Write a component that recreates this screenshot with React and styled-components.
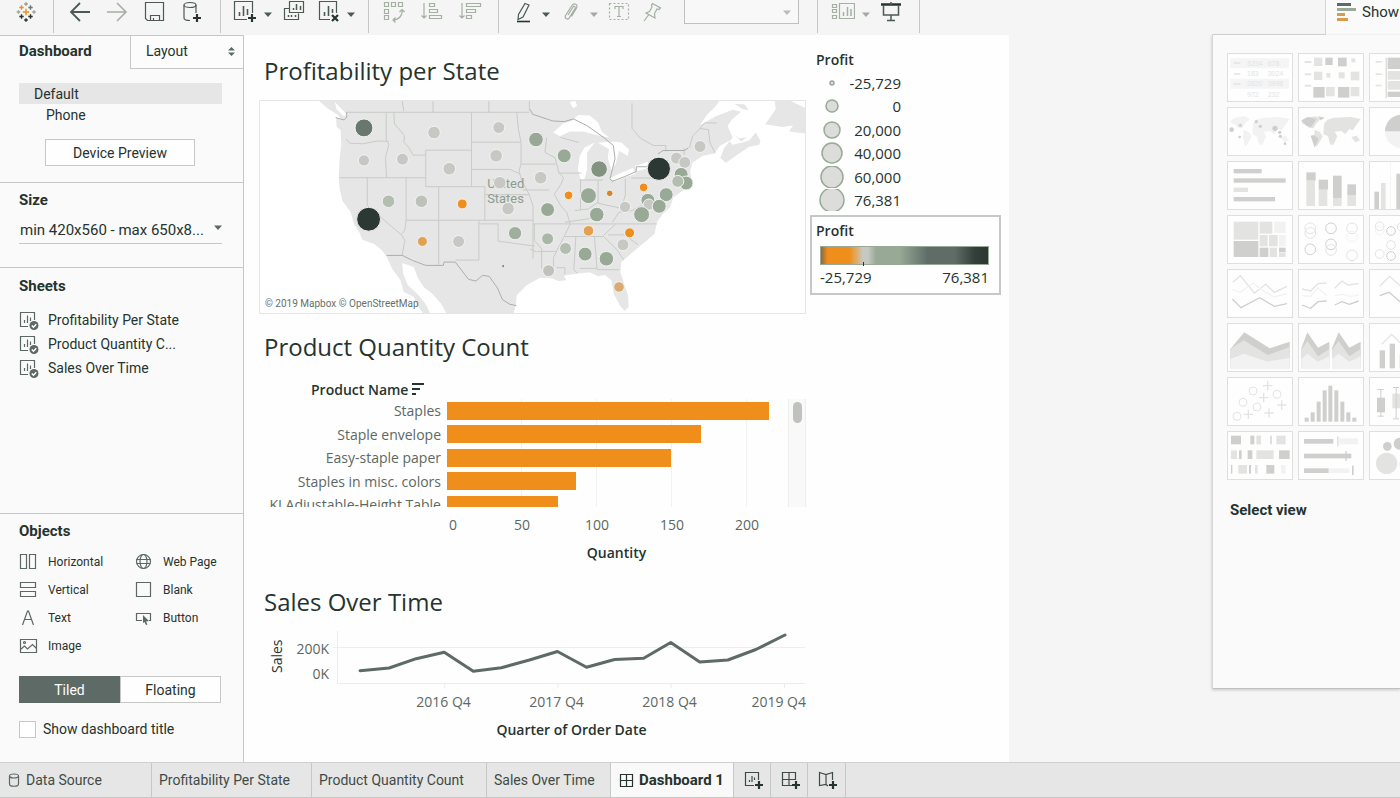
import React from "react";
import styled, { createGlobalStyle } from "styled-components";

const ink = "#26332e";
const soft = "#5c6863";
const line = "#c6c8c5";
const green = "#98a996";
const grey = "#c7c8c4";
const orange = "#f08e1c";
const uiFont = 'Roboto, "Liberation Sans", sans-serif';
const vizFont = '"Open Sans", "Noto Sans", sans-serif';

const GlobalStyle = createGlobalStyle`
  * { box-sizing: border-box; }
  body { margin: 0; background: #f4f5f4; color: ${ink}; font-family: ${uiFont}; font-size: 14px; }
  button, select, input { font: inherit; color: inherit; margin: 0; }
  button { cursor: pointer; background: none; border: 0; padding: 0; }
  h1, h2, h3, ul, p { margin: 0; padding: 0; }
`;

const Page = styled.div`
  min-height: 100vh;
  display: flex;
  flex-direction: column;
  overflow: hidden;
`;

/* ---------- toolbar ---------- */
const Toolbar = styled.header`
  display: flex;
  height: 35px;
  background: #f4f5f4;
`;
const ToolGroup = styled.div`
  flex: none;
  display: flex;
  gap: ${(p) => p.$gap}px;
  width: ${(p) => p.$width}px;
  height: 33px;
  padding: 0 0 9px ${(p) => p.$pad}px;
  border-right: 1px solid ${line};
`;
const ToolButton = styled.button`
  width: 24px;
  height: 24px;
  color: ${(p) => (p.$muted ? "#a3b0a2" : "#4c5a54")};
  svg { display: block; }
`;
const Split = styled.div`
  display: flex;
  align-items: center;
  gap: 7px;
`;
const CaretButton = styled.button`
  width: 8px;
  height: 24px;
  color: ${(p) => (p.$muted ? "#a3a9a3" : "#4c5a54")};
`;
const FitSelect = styled.select`
  appearance: none;
  width: 115px;
  height: 24px;
  margin-left: 11px;
  border: 1px solid #bfc1be;
  border-top: 0;
  background: #f8f8f8;
`;
const SelectWrap = styled.label`
  display: flex;
  align-items: center;
  position: relative;
  svg { position: absolute; right: ${(p) => p.$right}px; pointer-events: none; color: ${(p) => p.$color}; }
`;
const ShowMeHead = styled.div`
  display: flex;
  width: 188px;
  margin-left: auto;
`;
const ShowMeEdge = styled.div`
  flex: 1;
  border-bottom: 1px solid #d6d7d5;
`;
const ShowMeTab = styled.button`
  display: flex;
  align-items: center;
  gap: 6px;
  width: 75px;
  padding: 0 0 11px 11px;
  white-space: nowrap;
  font-size: 15px;
  background: #fafafa;
  border-left: 1px solid #d6d7d5;
  svg { flex: none; }
`;

/* ---------- workspace ---------- */
const Workspace = styled.div`
  flex: 1;
  display: flex;
  align-items: stretch;
`;
const Sidebar = styled.aside`
  flex: none;
  width: 244px;
  display: flex;
  flex-direction: column;
  background: #fafafa;
  border-right: 1px solid ${line};
`;
const Panes = styled.div`
  display: flex;
  height: 34px;
  border-top: 1px solid ${line};
`;
const PaneTab = styled.button`
  display: flex;
  align-items: center;
  justify-content: space-between;
  text-align: left;
  ${(p) =>
    p.$active
      ? "width: 130px; padding-left: 19px; padding-bottom: 3px; font-size: 15px; font-weight: 700;"
      : `flex: 1; padding: 0 7px 2px 15px; background: #fcfcfc; border-left: 1px solid ${line}; border-bottom: 1px solid ${line};`}
`;
const Section = styled.section`
  padding: ${(p) => p.$pad};
  border-bottom: ${(p) => (p.$last ? 0 : 1)}px solid ${line};
  flex: ${(p) => (p.$grow ? 1 : "none")};
`;
const SectionTitle = styled.h3`
  font-size: 15px;
  line-height: 20px;
  font-weight: 700;
`;
const Device = styled.button`
  display: block;
  width: 100%;
  height: 21px;
  text-align: left;
  padding-left: ${(p) => (p.$active ? 15 : 27)}px;
  background: ${(p) => (p.$active ? "#e5e6e5" : "none")};
`;
const PreviewButton = styled.button`
  display: block;
  width: 150px;
  height: 27px;
  margin: 14px 0 0 26px;
  background: #fefefe;
  border: 1px solid ${line};
`;
const SizeSelect = styled.select`
  appearance: none;
  width: 100%;
  height: 27px;
  margin-top: 7px;
  padding: 0 0 0 1px;
  font-size: 15px;
  background: none;
  border: 0;
  border-bottom: 1px solid ${line};
  border-radius: 0;
`;
const SheetList = styled.ul`
  list-style: none;
  margin-top: 12px;
`;
const Item = styled.button`
  display: flex;
  align-items: center;
  gap: 9px;
  height: ${(p) => (p.$small ? 28 : 24)}px;
  font-size: ${(p) => (p.$small ? 12 : 14)}px;
  white-space: nowrap;
  svg { color: #5c6863; }
`;
const ObjectGrid = styled.div`
  display: grid;
  grid-template-columns: 115px 1fr;
  margin-top: 7px;
`;
const Segmented = styled.div`
  display: flex;
  width: 202px;
  height: 27px;
  margin-top: 16px;
`;
const Segment = styled.button`
  flex: 1;
  color: ${(p) => (p.$active ? "#fff" : ink)};
  background: ${(p) => (p.$active ? "#5d6a65" : "#fefefe")};
  border: 1px solid ${(p) => (p.$active ? "#5d6a65" : line)};
`;
const CheckLabel = styled.label`
  display: flex;
  align-items: center;
  gap: 7px;
  margin-top: 16px;
  height: 20px;
`;
const Check = styled.input`
  appearance: none;
  width: 17px;
  height: 17px;
  background: #fff;
  border: 1px solid ${line};
`;

/* ---------- dashboard ---------- */
const Canvas = styled.main`
  flex: 0 1 765px;
  display: flex;
  gap: 4px;
  padding: 13px 8px 16px 15px;
  background: #fefefe;
  font-family: ${vizFont};
`;
const Charts = styled.div`
  flex: 1;
`;
const Title = styled.h2`
  padding: ${(p) => p.$top}px 0 0 5px;
  font-size: 24px;
  line-height: 40px;
  font-weight: 400;
  white-space: nowrap;
`;
const MapFrame = styled.div`
  margin-top: 9px;
  border: 1px solid #e4e5e4;
  background: #fff;
  display: grid;
  > * { grid-area: 1 / 1; }
  svg { display: block; width: 100%; height: auto; }
`;
const Attribution = styled.p`
  align-self: end;
  padding: 0 0 1px 5px;
  font: 10px/16px Roboto, sans-serif;
  color: #65706b;
`;
const BarHead = styled.div`
  display: flex;
  align-items: center;
  gap: 4px;
  height: 20px;
  margin: 12px 0 0 52px;
  font-size: 14px;
  font-weight: 600;
`;
const BarChart = styled.div`
  display: grid;
  grid-template-columns: 188px 1fr 17px;
  height: 108px;
  overflow: hidden;
`;
const Rows = styled.div`
  display: grid;
  grid-template-rows: repeat(5, 1fr);
  align-items: center;
  height: 117px;
`;
const BarNames = styled(Rows)`
  padding-right: 6px;
  text-align: right;
  font-size: 14px;
  color: ${soft};
  white-space: nowrap;
`;
const Bars = styled(Rows)`
  border-right: 1px solid #ededec;
  background: linear-gradient(to left, #f1f2f0 1px, transparent 1px) 0 0 / 22% 100%;
`;
const Bar = styled.div`
  height: 18px;
  background: ${orange};
`;
const Scroller = styled.div`
  background: #f9f9f9;
  border-right: 1px solid #ededec;
  padding: 3px 3px 0 4px;
`;
const Thumb = styled.div`
  width: 9px;
  height: 21px;
  border-radius: 5px;
  background: #bfc2bd;
`;
const Axis = styled.div`
  display: grid;
  grid-template-columns: ${(p) => p.$columns};
  margin: ${(p) => p.$margin};
  font-size: 14px;
  line-height: 20px;
  color: ${soft};
  text-align: center;
  white-space: nowrap;
`;
const LastTick = styled.span`
  text-align: right;
`;
const AxisTitle = styled.div`
  margin-top: 8px;
  padding-left: ${(p) => p.$left}px;
  text-align: center;
  font-size: 14px;
  line-height: 20px;
  font-weight: 600;
`;
const LineChart = styled.div`
  display: grid;
  grid-template-columns: 28px 42px 1fr;
  height: 60px;
  margin-top: 7px;
  padding-left: 4px;
  svg { display: block; width: 100%; height: 60px; }
`;
const SideTitle = styled.div`
  writing-mode: vertical-rl;
  transform: rotate(180deg);
  font-size: 14px;
  line-height: 20px;
  width: 20px;
  height: 54px;
  text-align: center;
  margin-left: 4px;
`;
const Ticks = styled.div`
  padding: 7px 4px 0 0;
  font-size: 14px;
  line-height: 25px;
  text-align: right;
  color: ${soft};
`;
const Legends = styled.aside`
  flex: none;
  width: 191px;
  padding-top: 1px;
`;
const LegendTitle = styled.h3`
  font-size: 14px;
  line-height: 20px;
  font-weight: 600;
`;
const SizeLegend = styled.div`
  padding: 1px 6px 0;
`;
const SizeRows = styled.div`
  display: grid;
  grid-template-rows: repeat(6, 1fr);
  height: 141px;
  margin-top: 1px;
`;
const SizeRow = styled.div`
  display: flex;
  align-items: center;
  justify-content: space-between;
  width: 85px;
  font-size: 15px;
  svg { margin-left: 2px; }
`;
const ColorLegend = styled.div`
  margin-top: 3px;
  height: 80px;
  padding: 4px 10px 0 4px;
  border: 2px solid #c6c8c5;
`;
const Ramp = styled.div`
  height: 19px;
  margin: 5px 0 0 4px;
  border: 1px solid ${green};
  background: linear-gradient(to right, #8b6a3a 0, ${orange} 4%, ${orange} 17%, #ddb077 22%, ${grey} 25%, ${grey} 28%, ${green} 33%, ${green} 47%, #5f6c67 64%, #5f6c67 80%, #343f3b 92%, #2c3733 100%);
`;
const RampTick = styled.div`
  width: 1px;
  height: 4px;
  margin: 15px 0 0 42px;
  background: ${ink};
`;
const RampLabels = styled.div`
  display: flex;
  justify-content: space-between;
  padding: 2px 0 0 4px;
  font-size: 15px;
  line-height: 20px;
`;

/* ---------- show me ---------- */
const ShowMe = styled.aside`
  align-self: flex-start;
  flex: none;
  width: 188px;
  height: 654px;
  margin-left: auto;
  padding: 18px 0 0 14px;
  overflow: hidden;
  background: #fafafa;
  border-left: 1px solid #d6d7d5;
  border-bottom: 1px solid #bfc1be;
  box-shadow: 0 1px 3px rgba(0, 0, 0, 0.2);
`;
const ThumbGrid = styled.div`
  display: grid;
  grid-template-columns: repeat(3, 66px);
  gap: 5px;
`;
const Thumbnail = styled.button`
  height: 49px;
  background: #fefefe;
  border: 1px solid #dedfde;
  overflow: hidden;
  svg { display: block; width: 66px; height: 49px; margin: -1px; }
`;
const SelectView = styled.h3`
  margin: 20px 0 0 3px;
  font-size: 15px;
  line-height: 20px;
`;

/* ---------- sheet tabs ---------- */
const TabBar = styled.nav`
  display: flex;
  height: 36px;
  background: #e5e6e5;
  border-top: 1px solid #cfd1ce;
  border-bottom: 1px solid ${line};
`;
const SheetTab = styled.button`
  display: flex;
  align-items: center;
  gap: ${(p) => (p.$active ? 1 : 6)}px;
  flex: none;
  width: ${(p) => p.$width}px;
  padding-left: ${(p) => p.$pad || 7}px;
  white-space: nowrap;
  color: ${(p) => (p.$active ? ink : "#3f4b46")};
  font-size: ${(p) => (p.$active ? 15 : 14)}px;
  font-weight: ${(p) => (p.$active ? 700 : 400)};
  background: ${(p) => (p.$active ? "#f9f9f9" : "none")};
  border-right: 1px solid ${line};
  svg { flex: none; }
`;

const Caret = () => (
  <svg width="8" height="5" viewBox="0 0 8 5" aria-hidden="true"><path d="M0 .5h8L4 5z" fill="currentColor" /></svg>
);

const Icon = ({ children, size = 24, w = 1.2 }) => (
  <svg width={size} height={size} viewBox={`0 0 ${size} ${size}`} fill="none" stroke="currentColor" strokeWidth={w} aria-hidden="true">
    {children}
  </svg>
);
const Plus = ({ x, y }) => <path d={`M${x - 4} ${y}h8M${x} ${y - 4}v8`} stroke={ink} strokeWidth="2.2" />;

function LogoIcon() {
  const crosses = [
    [12, 12, 3.2, orange], [12, 4, 1.8, "#8f9f90"], [12, 20, 1.8, ink], [4.5, 12, 1.8, green], [20, 12, 1.8, green],
    [7.5, 7.5, 2.2, orange], [16.5, 7.5, 2.2, "#6b7a72"], [7.5, 16.5, 2.2, ink], [16.5, 16.5, 2.2, ink],
  ];
  return (
    <Icon>
      {crosses.map(([x, y, r, c], i) => <path key={i} d={`M${x - r} ${y}h${r * 2}M${x} ${y - r}v${r * 2}`} stroke={c} strokeWidth="1.4" />)}
    </Icon>
  );
}

function TopBar() {
  return (
    <Toolbar>
      <ToolGroup $width={54} $pad={14} $gap={0}><ToolButton aria-label="Start page"><LogoIcon /></ToolButton></ToolGroup>
      <ToolGroup $width={167} $pad={14} $gap={13}>
        <ToolButton aria-label="Undo"><Icon w={1.8}><path d="M22 12H3M12 3l-9 9 9 9" /></Icon></ToolButton>
        <ToolButton aria-label="Redo" $muted><Icon w={1.6}><path d="M2 12h19M12 3l9 9-9 9" /></Icon></ToolButton>
        <ToolButton aria-label="Save"><Icon><path d="M3.5 2.5h18v18H5.500l-2-2zM8.500 20.500v-5h9v5M11.500 20.500v-2.500" /></Icon></ToolButton>
        <ToolButton aria-label="New data source">
          <Icon><ellipse cx="11" cy="5" rx="6" ry="2.5" /><path d="M5 5v13c0 2 3 2.5 6 2.5M17 5v8" /><Plus x={18} y={18} /></Icon>
        </ToolButton>
      </ToolGroup>
      <ToolGroup $width={148} $pad={12} $gap={10}>
        <Split>
          <ToolButton aria-label="New worksheet">
            <Icon><path d="M14 19.5H1.500v-18h18V13" /><path d="M6.500 16v-4M10.500 16V6M14.500 15V9" strokeWidth="1.6" /><Plus x={19} y={18} /></Icon>
          </ToolButton>
          <CaretButton aria-label="New worksheet options"><Caret /></CaretButton>
        </Split>
        <ToolButton aria-label="Duplicate">
          <Icon><path d="M7.500 1.500h14v11h-14zM7 8.500H2.500v11h14v-6" /><path d="M11.500 10V8M14.500 10V4M18.500 10V6M6.500 17v-2M9.500 17v-2M13.500 17v-2" strokeWidth="1.5" /></Icon>
        </ToolButton>
        <Split>
          <ToolButton aria-label="Clear sheet">
            <Icon><path d="M14 19.500H3.500v-18h17V13" /><path d="M8.500 16v-4M12.500 16V6M16.500 13V9" strokeWidth="1.6" /><path d="M16 15l6 6M22 15l-6 6" stroke={ink} strokeWidth="2.2" /></Icon>
          </ToolButton>
          <CaretButton aria-label="Clear sheet options"><Caret /></CaretButton>
        </Split>
      </ToolGroup>
      <ToolGroup $width={130} $pad={13} $gap={14}>
        <ToolButton aria-label="Swap rows and columns" $muted>
          <Icon><path d="M2.500 2.500h4v4h-4zM9.500 2.500h4v4h-4zM16.500 2.500h4v4h-4zM2.500 9.500h4v4h-4zM2.500 15.500h4v4h-4zM20 9c1 6-3 11-9 11M13.500 17.500L11 20l2.500 2.500M17.500 12L20 9.500l2.500 2.500" /></Icon>
        </ToolButton>
        <ToolButton aria-label="Sort ascending" $muted><Icon><path d="M4 3v15M1.500 15.500L4 18l2.500-2.500M9.500 3.500h5v3h-5zM9.500 9.500h8v3h-8zM9.500 15.500h12v3h-12z" /></Icon></ToolButton>
        <ToolButton aria-label="Sort descending" $muted><Icon><path d="M4 3v15M1.500 15.500L4 18l2.500-2.500M8.500 3.500h14v3h-14zM8.500 9.500h9v3h-9zM8.500 15.500h5v3h-5z" /></Icon></ToolButton>
      </ToolGroup>
      <ToolGroup $width={319} $pad={12} $gap={9}>
        <Split>
          <ToolButton aria-label="Highlight"><Icon><path d="M14 3.500l4 1.500-6 12-5 2.500.500-5z" /><path d="M6 21.500h13" stroke={ink} strokeWidth="1.6" /></Icon></ToolButton>
          <CaretButton aria-label="Highlight options"><Caret /></CaretButton>
        </Split>
        <Split>
          <ToolButton aria-label="Group members" $muted><Icon><path d="M9 15l5-8c1-1.500 3-.5 2 1.500l-5.500 9c-1.500 3-5.500 1-4-2l6.500-10c2-3 6.500-1 4.500 2.500l-5 8.500" /></Icon></ToolButton>
          <CaretButton aria-label="Group options" $muted><Caret /></CaretButton>
        </Split>
        <ToolButton aria-label="Show mark labels" $muted>
          <Icon><rect x="2.5" y="3.5" width="19" height="16" strokeDasharray="2 2" /><path d="M8 9V6.500h8V9M12 6.500v10M10 16.500h4" /></Icon>
        </ToolButton>
        <ToolButton aria-label="Fix axes" $muted><Icon><path d="M12.500 3.500l8 4.500-1.500 1.500-2-.5-2.500 4.500.5 4.500-9-5 3.500-1.500 2.500-4.500-.5-2zM8.500 15L4 21" /></Icon></ToolButton>
        <SelectWrap $right={8} $color="#b9bcb8"><FitSelect aria-label="Fit" defaultValue=""><option value="" /></FitSelect><Caret /></SelectWrap>
      </ToolGroup>
      <ToolGroup $width={102} $pad={13} $gap={9}>
        <Split>
          <ToolButton aria-label="Show cards" $muted>
            <Icon><path d="M8.500 3.500h15v15h-15zM1.500 4.500h4v3h-4zM1.500 9.500h4v3h-4zM1.500 15.500h4v3h-4z" /><path d="M12.500 16v-4M16.500 16V7M20 16V9" strokeWidth="1.5" /></Icon>
          </ToolButton>
          <CaretButton aria-label="Card options" $muted><Caret /></CaretButton>
        </Split>
        <ToolButton aria-label="Presentation mode"><Icon w={1.5}><path d="M2 4.500h20" stroke={ink} strokeWidth="2.5" /><path d="M4.500 5v10h15V5M12 15v5M8 20.500h8M12 2v3" /></Icon></ToolButton>
      </ToolGroup>
      <ShowMeHead>
        <ShowMeEdge />
        <ShowMeTab>
          <svg width="19" height="18" viewBox="0 0 19 18" aria-hidden="true">
            <path d="M0 0h14v3H0z" fill="#5d6a65" /><path d="M0 5h19v3H0z" fill={green} /><path d="M0 10h8v3H0zM0 15h11v3H0z" fill="#d99a4c" />
          </svg>
          Show
        </ShowMeTab>
      </ShowMeHead>
    </Toolbar>
  );
}

const SheetIcon = () => (
  <Icon size={20}>
    <path d="M9 16.500H1.500v-14h14V10" />
    <path d="M5.500 13v-3M8.500 13V5.500M11.500 11V7.500" />
    <circle cx="15" cy="15.5" r="4.5" fill="#5d6a65" stroke="none" />
    <path d="M12.800 15.500l1.700 1.700 2.800-3" stroke="#fff" strokeWidth="1.4" />
  </Icon>
);

const objects = [
  ["Horizontal", <path d="M1.500 2.500h6v14h-6zM10.500 2.500h6v14h-6z" />],
  ["Web Page", <><circle cx="9.5" cy="9.5" r="7" /><ellipse cx="9.5" cy="9.5" rx="3.5" ry="7" /><path d="M2.500 7.500h14M2.500 11.500h14" /></>],
  ["Vertical", <path d="M1.500 2.500h15v5h-15zM1.500 11.500h15v5h-15z" />],
  ["Blank", <path d="M2.500 2.500h14v14h-14z" />],
  ["Text", <path d="M3.500 17l5-14h1l5 14M5.500 11.500h7" />],
  ["Button", <><path d="M8 12.500H2.500v-7h14v7H15" /><path d="M9 7l6 6-3 .5 1.500 3-1.500.5-1.500-3L9 15z" fill="#5c6863" stroke="none" /></>],
  ["Image", <><path d="M1.500 3.500h16v13h-16zM1.500 13.500l4-3.500 3 3 5-4.500 4 4" /><circle cx="5.5" cy="6.5" r="1" /></>],
];

const sheets = ["Profitability Per State", "Product Quantity C...", "Sales Over Time"];

function LeftPane() {
  return (
    <Sidebar>
      <Panes>
        <PaneTab $active>Dashboard</PaneTab>
        <PaneTab>
          Layout
          <svg width="9" height="9" viewBox="0 0 9 9" aria-hidden="true"><path d="M1 3.500h7L4.500 0zM1 5.500h7L4.500 9z" fill="#5c6863" /></svg>
        </PaneTab>
      </Panes>
      <Section $pad="14px 21px 16px 19px">
        <Device $active>Default</Device>
        <Device>Phone</Device>
        <PreviewButton>Device Preview</PreviewButton>
      </Section>
      <Section $pad="7px 21px 23px 19px">
        <SectionTitle>Size</SectionTitle>
        <SelectWrap $right={0} $color="#5c6863">
          <SizeSelect aria-label="Dashboard size"><option>min 420x560 - max 650x8...</option></SizeSelect>
          <Caret />
        </SelectWrap>
      </Section>
      <Section $pad="8px 19px 0" $grow>
        <SectionTitle>Sheets</SectionTitle>
        <SheetList>
          {sheets.map((s) => <li key={s}><Item><SheetIcon />{s}</Item></li>)}
        </SheetList>
      </Section>
      <Section $pad="7px 19px 23px" $last>
        <SectionTitle>Objects</SectionTitle>
        <ObjectGrid>
          {objects.map(([name, shape]) => <Item key={name} $small><Icon size={20}>{shape}</Icon>{name}</Item>)}
        </ObjectGrid>
        <Segmented><Segment $active>Tiled</Segment><Segment>Floating</Segment></Segmented>
        <CheckLabel><Check type="checkbox" />Show dashboard title</CheckLabel>
      </Section>
    </Sidebar>
  );
}

/* x, y, radius, colour of every state mark */
const pale = "#b3bdb0";
const mixed = "#e2a051";
const marks = [
  [340, 261, 26, "#69786f"], [340, 359, 16], [456, 355, 17], [551, 275, 18], [746, 260, 17], [738, 345, 18], [597, 384, 18],
  [749, 426, 18], [774, 504, 18], [513, 482, 18, "#bcc2b9"], [414, 482, 18, pale], [636, 490, 14, orange], [516, 603, 14, mixed],
  [625, 603, 17], [795, 578, 19, "#a0ae9d"], [759, 677, 3, ink], [354, 536, 35, "#2b3833"], [858, 296, 21, green],
  [943, 345, 20, green], [872, 411, 18], [1048, 385, 24, "#82937f"], [956, 464, 12, orange], [1016, 465, 23, green],
  [1080, 458, 9, "#d8842a"], [1182, 440, 12, orange], [1228, 384, 34, "#2b3833"], [1281, 352, 17], [1306, 365, 17], [1352, 317, 17],
  [1295, 401, 20, green], [1310, 427, 20, green], [1285, 422, 17, pale], [1250, 462, 20, green], [1195, 479, 20, green],
  [1198, 492, 16], [1229, 497, 20, green], [1176, 522, 23, green], [1126, 499, 16], [1041, 522, 21, green], [1016, 571, 15, mixed],
  [1140, 577, 14, orange], [1120, 613, 17], [1070, 655, 21, green], [1006, 641, 20, green], [947, 624, 17, pale],
  [893, 595, 17, "#aab6a7"], [893, 507, 20, green], [896, 691, 17, "#bfc2bb"], [1108, 740, 15, "#d8ab72"],
];

function StateMap() {
  return (
    <svg viewBox="27 180 1641 639" role="img" aria-label="Profit by state">
      <g fill="#e5e6e5">
        <path d="M205 180L232 203 262 222 272 236 256 232 258 258 270 268 272 310 267 350 264 410 266 440 275 480 300 515 310 550 326 575 335 598 370 610 395 630 408 648 425 685 450 720 460 755 490 770 500 795 520 822H790L797 795 800 765 830 735 870 712 905 714 925 722 950 720 942 706 980 700 1020 696 1045 708 1065 704 1085 720 1092 760 1110 795 1125 812 1137 800 1135 765 1125 735 1112 695 1115 665 1150 635 1185 605 1215 580 1222 545 1240 520 1262 500 1272 470 1300 450 1328 430 1322 390 1330 365 1360 345 1396 338 1412 315 1440 300 1450 312 1480 305 1500 298 1520 275 1534 300 1530 312 1500 318 1460 345 1430 366 1413 352 1424 322 1450 290 1435 255 1446 238 1475 212 1450 206 1400 226 1352 252 1372 222 1400 195 1410 180z" />
        <path d="M1577 180L1580 205 1548 250 1600 258 1632 254 1620 272 1668 278V200L1625 180zM1455 188l30 2 14 18-20-4zM1455 280l15 12 24-2-18 12z" />
      </g>
      <g fill="#fff">
        <path d="M455 668L490 680 502 712 522 742 545 760 572 790 590 822H540L528 795 505 765 472 735 458 700z" />
        <path d="M252 183l20 20 18 20-12 2-20-20z" />
        <path d="M910 275L940 248 965 240 985 222 1020 224 1045 245 1056 272 1078 290 1040 282 1000 272 960 272 930 286z" />
        <path d="M990 345L1004 320 1035 305 1012 335 1012 385 1003 418 992 415 984 385z" />
        <path d="M1045 306L1092 302 1115 305 1138 325 1134 345 1108 330 1098 370 1085 388 1074 350 1078 325z" />
        <path d="M1078 414L1110 398 1150 382 1158 400 1130 408 1100 420z" />
        <path d="M1156 376L1195 363 1200 380 1160 392z" />
        <path d="M960 183l16-3 6 14-12 8z" />
      </g>
      <g fill="none" stroke="#c9cbc8" strokeWidth="3">
        <path d="M287 214H838M407 214V300L415 310 405 350 408 411M287 295l10 12 40 2 40-8 38 0M266 411H526M350 411V495L455 585 463 600 455 645M467 411V539M526 328V438M430 214l2 35 30 35-2 20 14 15 14 24h38M526 328H664M664 214V438M664 304H811M526 438H704M664 386H780l30 14M565 438V673M467 539H850M704 438V539M686 539v120h-70M686 550h58v52l110 15M467 539l-4 30-8 10M704 462H838M800 214l5 50 8 40v66l-6 20 8 30 22 40 12 36 0 84v75" />
        <path d="M455 180l5 30M548 180v34M716 180v34M838 180v28M813 370h105M818 448h80M850 550H1222M925 397h70M890 290l-5 45 30 15 12 45 14 16-8 20-20 30 20 35 18 20 10 35-20 40-30 60 0 34M862 633h56M932 290l55 15M990 418h70M992 418v90M1045 418v70l70 15 12-40v-50M1145 412h80M975 510l40-5 30-20M945 545l70-10 35-12M1088 545l20-30 40-5 35-20M945 588h115M978 588l-6 100 10 10M1034 588l8 100M990 684h50M1042 688h68M1062 588l40 40 20 30M1058 588l40-38M1075 583h50l40 30M853 550v50l22 25 0 60M920 682h25v20M840 625l20 10" />
        <path d="M1147 187v75l25 30 40 22h37v18M1320 320l10-35 22-22 25 3 5 40 15 30M1304 322v20M1352 262l15-16h35" />
      </g>
      <g fill="none" stroke="#a9b0a8" strokeWidth="3">
        <path d="M408 645l48 0 30 15 40 15h53l2-10 34 0 40 52 22 5 20-17 20 3 25 35 15 35 22 14 20 4" />
        <path d="M255 230l25 7 8-8v-15M840 205l8 15 60 20 35 2 28-8 40 20 50 35 30 25 5 40-15 60 6 8 40-15 33-15v-14h36M1225 340l15-11h65l12-8" />
      </g>
      <g fontSize="39" fill="#8f9c8e" fontFamily="Roboto, sans-serif">
        <text x="711" y="441">United</text>
        <text x="711" y="487">States</text>
      </g>
      <g stroke="#f2f3f2" strokeWidth="3">
        {marks.map(([x, y, r, c]) => <circle key={`${x}-${y}`} cx={x} cy={y} r={r + 1} fill={c || grey} />)}
      </g>
    </svg>
  );
}

const products = [["Staples", 215], ["Staple envelope", 170], ["Easy-staple paper", 150], ["Staples in misc. colors", 86], ["KI Adjustable-Height Table", 74]];
const sizes = [["-25,729", 2], ["0", 6], ["20,000", 8], ["40,000", 10], ["60,000", 11], ["76,381", 12]];

function Dashboard() {
  return (
    <Canvas>
      <Charts>
        <Title $top={3}>Profitability per State</Title>
        <MapFrame><StateMap /><Attribution>© 2019 Mapbox © OpenStreetMap</Attribution></MapFrame>
        <Title $top={13}>Product Quantity Count</Title>
        <BarHead>
          Product Name
          <svg width="12" height="12" viewBox="0 0 12 12" aria-hidden="true"><path d="M0 0h12v2H0zM0 5h8v2H0zM0 10h4v2H0z" fill={ink} /></svg>
        </BarHead>
        <BarChart>
          <BarNames>{products.map(([n]) => <div key={n}>{n}</div>)}</BarNames>
          <Bars>{products.map(([n, v]) => <Bar key={n} style={{ width: `${(v / 228) * 100}%` }} />)}</Bars>
          <Scroller><Thumb /></Scroller>
        </BarChart>
        <Axis $columns="12px 126px 24px 126px 24px" $margin="8px 0 0 188px">
          <span>0</span><span>50</span><span>100</span><span>150</span><span>200</span>
        </Axis>
        <AxisTitle $left={168}>Quantity</AxisTitle>
        <Title $top={19}>Sales Over Time</Title>
        <LineChart>
          <SideTitle>Sales</SideTitle>
          <Ticks>200K<br />0K</Ticks>
          <svg viewBox="0 0 472 60" preserveAspectRatio="none" role="img" aria-label="Sales by quarter">
            <path d="M4.500 2v52.500H471M0 18.500h471M111.500 54v5M224.500 54v5M337.500 54v5M450.500 54v5" fill="none" stroke="#ededec" />
            <polyline fill="none" stroke="#5d6a65" strokeWidth="3" strokeLinejoin="round" strokeLinecap="round" points="27,41.7 56,39 83,29.7 111,23.3 140,42.3 168,38.7 196,31 224,22.5 253,38.3 281,30.5 310,29.3 337,13.5 366,33 394,31 422,20.5 451,6" />
          </svg>
        </LineChart>
        <Axis $columns="repeat(3, 113px) 1fr" $margin="3px 0 0 128px">
          <span>2016 Q4</span><span>2017 Q4</span><span>2018 Q4</span><LastTick>2019 Q4</LastTick>
        </Axis>
        <AxisTitle $left={78}>Quarter of Order Date</AxisTitle>
      </Charts>
      <Legends>
        <SizeLegend>
          <LegendTitle>Profit</LegendTitle>
          <SizeRows>
            {sizes.map(([t, r]) => (
              <SizeRow key={t}>
                <svg width="28" height="22" viewBox="0 0 28 22" aria-hidden="true"><circle cx="14" cy="11" r={r} fill="#dcdddb" stroke={green} strokeWidth="1.5" /></svg>
                {t}
              </SizeRow>
            ))}
          </SizeRows>
        </SizeLegend>
        <ColorLegend>
          <LegendTitle>Profit</LegendTitle>
          <Ramp><RampTick /></Ramp>
          <RampLabels><span>-25,729</span><span>76,381</span></RampLabels>
        </ColorLegend>
      </Legends>
    </Canvas>
  );
}

/* chart type previews, drawn on a 198 x 147 board */
const A = "#cfd0cd";
const B = "#e3e4e2";
const C = "#f1f2f1";
const rects = (list) => list.map(([x, y, w, h, f], i) => <rect key={i} x={x} y={y} width={w} height={h} fill={f || B} />);
const rings = (list, r) => list.map(([x, y, c], i) => <circle key={i} cx={x} cy={y} r={r} fill="none" stroke={c || B} strokeWidth="3" />);
const poly = (pts, c) => <polyline points={pts} fill="none" stroke={c} strokeWidth="4" />;
const world = "M10 42l14-10 30-4 14 8-14 14-8 14-14-2-8-10-10-2zM50 68l16 8 8 12-12 22-8 10-6-28zM78 50l10-12 20-6 50-2 30 6-10 14-14 20-10-4-12 16-12-10-20 2 8 14-12 26-10-2-6-24-14-6zM160 90l16-4 10 14-14 6z";
const table = (rows) => (
  <g fill={B} fontFamily="Liberation Sans, sans-serif" fontSize="21">
    <path d="M10 16h176v30H10zM10 77h176v30H10z" fill="#f5f5f5" />
    {rows.map(([a, b], i) => <g key={a}><text x="60" y={38 + i * 31}>{a}</text><text x="122" y={38 + i * 31}>{b}</text></g>)}
    <path d="M20 28h20v4H20zM20 61h20v4H20zM20 91h20v4H20z" />
  </g>
);
const thumbs = [
  table([["3234", "678"], ["183", "3024"], ["2820", "3998"], ["972", "232"]]),
  rects([[20, 24, 20, 6], [20, 61, 20, 6], [20, 95, 20, 6], [48, 14, 25, 25], [82, 14, 22, 22, A], [120, 14, 26, 26, A], [160, 16, 12, 12], [48, 56, 25, 25], [85, 60, 12, 14], [122, 58, 18, 18], [158, 56, 26, 26], [46, 102, 34, 32, A], [84, 102, 26, 28], [120, 102, 34, 32, A], [158, 102, 26, 28]]),
  rects([[20, 24, 18, 5], [20, 61, 18, 5], [20, 95, 18, 5], [50, 14, 3, 122, A], [56, 14, 130, 34, A], [56, 54, 130, 26, B], [56, 84, 130, 26, B], [56, 116, 130, 16, A]]),
  <><path d={world} fill={C} />{[[14, 68, 7], [40, 55, 5], [88, 44, 5], [100, 58, 5], [144, 64, 8], [158, 76, 5], [160, 88, 5], [38, 90, 4], [174, 110, 4]].map(([x, y, r]) => <circle key={x} cx={x} cy={y} r={r} fill={A} />)}</>,
  <><path d={world} fill={B} /><path d="M10 40l20-10 25 6-15 24-16-4zM48 84l14 12-12 26-12-36zM60 28l20 4-12 8z" fill={A} /></>,
  <><circle cx="98" cy="73" r="50" fill={C} /><path d="M48 73a50 50 0 0 1 100 0z" fill={A} /></>,
  rects([[20, 24, 84, 13, A], [20, 52, 156, 13, A], [20, 80, 43, 13, B], [20, 108, 124, 13, A]]),
  rects([[25, 60, 26, 75], [25, 34, 28, 25, A], [62, 86, 26, 49], [62, 56, 28, 30, A], [105, 112, 26, 23], [105, 44, 26, 68, A], [148, 102, 26, 33], [148, 70, 26, 32, A]]),
  rects([[16, 92, 14, 52, A], [36, 66, 14, 78], [64, 4, 2, 140, C], [82, 38, 14, 106, A], [102, 60, 14, 84]]),
  rects([[20, 20, 74, 54], [20, 78, 74, 48, A], [98, 20, 38, 36], [142, 20, 34, 34, C], [98, 60, 24, 34], [126, 60, 26, 34], [156, 60, 20, 34, C], [98, 98, 26, 28, A], [128, 98, 22, 28], [156, 98, 20, 14, A], [156, 114, 20, 12]]),
  rings([[37, 40], [37, 54], [37, 103, A], [99, 40, A], [99, 88, A], [99, 105], [162, 40], [162, 64, C], [162, 121]], 16),
  rings([[32, 34], [32, 46, C], [66, 48, A], [66, 90], [32, 117], [66, 123, A], [98, 36]], 13),
  <>{poly("18,40 40,20 82,72 116,46 142,70 180,52", B)}{poly("16,62 40,70 78,42 110,66 142,84 180,74", C)}{poly("16,90 42,116 98,86 142,112 180,104", A)}</>,
  <>{poly("12,60 38,66 60,44 86,42", B)}{poly("12,80 38,82 60,56 86,80", C)}{poly("12,108 38,118 60,98 86,96", A)}{poly("110,58 132,36 150,48 182,44", B)}{poly("110,80 132,76 158,82 182,78", C)}{poly("110,108 132,98 154,106 182,96", A)}</>,
  <>{poly("32,52 62,22 98,54", B)}{poly("32,80 60,70 98,102", A)}</>,
  <><path d="M10 78L52 28 128 76 188 56V134H10z" fill={A} /><path d="M10 78L50 52 122 96 188 72V134H10z" fill={B} /><path d="M10 108L50 92 122 116 188 104V138H10z" fill={C} /></>,
  <><path d="M10 76L28 28 60 74 94 56V134H10zM102 76L122 28 154 74 188 56V134H102z" fill={A} /><path d="M10 80L28 54 60 100 94 78V134H10zM102 80L122 54 154 100 188 78V134H102z" fill={B} /><path d="M10 108L28 92 60 116 94 100V138H10zM102 108L122 92 154 116 188 100V138H102z" fill={C} /></>,
  <>{rects([[32, 82, 16, 54, A], [62, 62, 16, 74, A], [92, 94, 16, 42, A]])}{poly("38,64 68,34 98,64", B)}</>,
  <>{rings([[30, 118], [48, 76], [78, 42], [90, 90], [150, 52]], 12)}<path d="M122 12v28M108 26h28M110 48v28M96 62h28M164 70v28M150 84h28M64 98v28M50 112h28M126 94v28M112 108h28" stroke={B} strokeWidth="4" /></>,
  rects([[20, 122, 12, 12, A], [38, 106, 12, 28, A], [56, 74, 12, 60, A], [74, 40, 12, 94, A], [91, 26, 12, 108, A], [109, 40, 12, 94, A], [127, 74, 12, 60, A], [145, 106, 12, 28, A], [163, 122, 12, 12, A]]),
  rects([[24, 62, 24, 44, A], [34, 36, 3, 82, A], [26, 36, 18, 3, A], [26, 116, 18, 3, A], [70, 50, 24, 44], [80, 30, 3, 94, A], [72, 30, 18, 3, A], [72, 124, 18, 3, A]]),
  rects([[12, 14, 30, 26, A], [70, 14, 12, 26, A], [88, 14, 14, 26], [130, 14, 4, 26, A], [148, 14, 28, 26], [12, 58, 18, 26], [36, 58, 8, 26, A], [62, 58, 14, 26, A], [88, 58, 52, 26], [156, 58, 32, 26, A], [12, 102, 4, 26, A], [34, 102, 26, 26], [66, 102, 6, 26, A], [84, 102, 8, 26], [118, 102, 24, 26, A], [162, 102, 14, 26, C]]),
  rects([[18, 24, 88, 14, A], [118, 16, 3, 30, A], [122, 22, 58, 18, C], [18, 68, 142, 14, A], [142, 60, 4, 30, A], [18, 112, 74, 14, A], [94, 112, 60, 14, C], [162, 104, 5, 28, A]]),
  <><circle cx="55" cy="46" r="13" fill={A} /><circle cx="92" cy="38" r="18" fill={A} /><circle cx="53" cy="97" r="32" fill={B} /><circle cx="110" cy="100" r="20" fill={C} /></>,
];

const TabGrid = ({ plus }) => (
  <Icon size={20}><path d={plus ? "M12 15.500H2.500v-13h13V10M9 2.500v13M2.500 9.500h13" : "M2.500 4.500h12v12h-12zM8.500 4.500v12M2.500 10.500h12"} />{plus && <Plus x={16} y={15} />}</Icon>
);

export default function App() {
  return (
    <Page>
      <GlobalStyle />
      <TopBar />
      <Workspace>
        <LeftPane />
        <Dashboard />
        <ShowMe>
          <ThumbGrid>
            {thumbs.map((t, i) => <Thumbnail key={i} aria-label={`Chart type ${i + 1}`}><svg viewBox="0 0 198 147">{t}</svg></Thumbnail>)}
          </ThumbGrid>
          <SelectView>Select view</SelectView>
        </ShowMe>
      </Workspace>
      <TabBar>
        <SheetTab $width={152} $pad={8}>
          <svg width="12" height="16" viewBox="0 0 12 16" fill="none" stroke="#5c6863" strokeWidth="1.2" aria-hidden="true"><ellipse cx="6" cy="4" rx="4.5" ry="2" /><path d="M1.500 4v8c0 3 9 3 9 0V4" /></svg>
          Data Source
        </SheetTab>
        <SheetTab $width={160}>Profitability Per State</SheetTab>
        <SheetTab $width={175}>Product Quantity Count</SheetTab>
        <SheetTab $width={124}>Sales Over Time</SheetTab>
        <SheetTab $width={123} $active><TabGrid />Dashboard 1</SheetTab>
        <SheetTab $width={37} $pad={9} aria-label="New worksheet">
          <Icon size={20}><path d="M11 15.500H2.500v-13h13V10M6.500 12v-2M9 12V6M11.500 10V7.500" /><Plus x={16} y={15} /></Icon>
        </SheetTab>
        <SheetTab $width={37} $pad={9} aria-label="New dashboard"><TabGrid plus /></SheetTab>
        <SheetTab $width={38} $pad={9} aria-label="New story">
          <Icon size={20}><path d="M11 16l-2-1.500-6.500 1V2.500l6.500 2 6.500-2V10M9 4.500v10" /><Plus x={16} y={15} /></Icon>
        </SheetTab>
      </TabBar>
    </Page>
  );
}
